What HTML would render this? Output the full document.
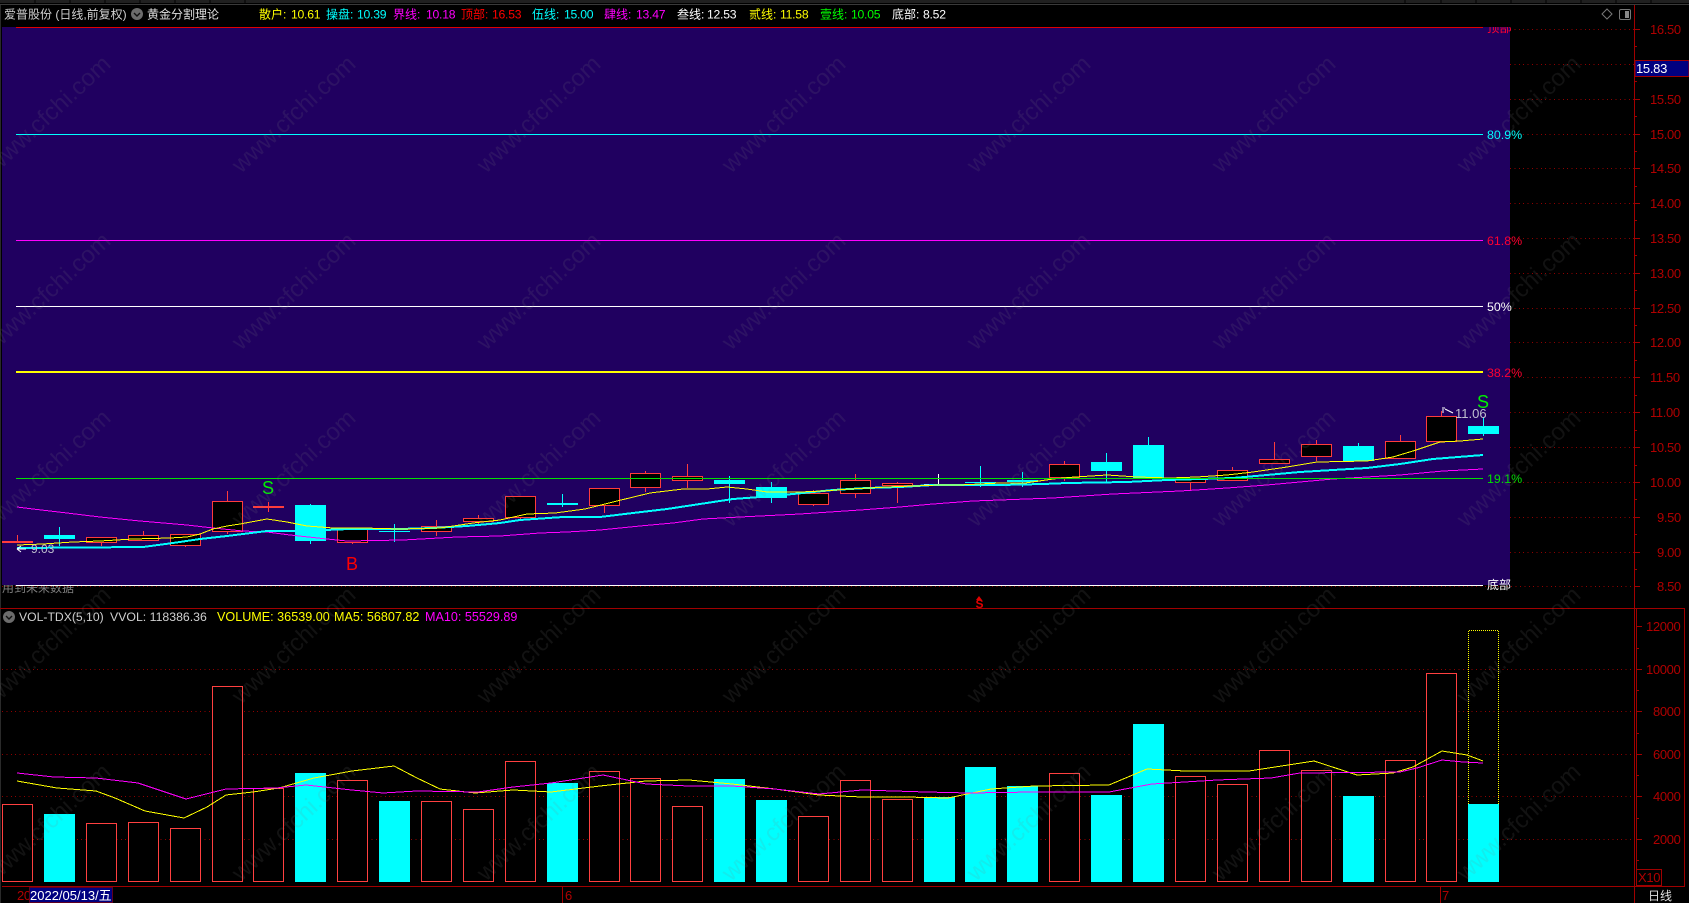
<!DOCTYPE html>
<html><head><meta charset="utf-8"><style>
html,body{margin:0;padding:0;background:#000;width:1689px;height:903px;overflow:hidden}
svg{display:block}
text{font-family:"Liberation Sans","Noto Sans CJK SC",sans-serif;font-size:12px;white-space:pre}
.hd text{font-size:12px}
.hd tspan{font-size:12.2px;letter-spacing:-.25px}
.ax text{fill:#b00000;font-size:13px;letter-spacing:-.35px}
.fb text{font-size:12.4px}
.wm text{fill:rgba(128,128,128,.14);font-size:24px}
</style></head><body>
<svg width="1689" height="903" viewBox="0 0 1689 903" xmlns="http://www.w3.org/2000/svg">
<defs><clipPath id="tc"><rect x="1480" y="27" width="60" height="12"/></clipPath></defs>
<rect width="1689" height="903" fill="#000"/>
<!-- top strip -->
<rect x="0" y="0" width="1689" height="3" fill="#202020"/>
<path d="M35 0V3M70 0V3M105 0V3M140 0V3M175 0V3M210 0V3M245 0V3M1405 0V3M1441 0V3M1476 0V3M1511 0V3M1546 0V3M1581 0V3M1616 0V3M1651 0V3" stroke="#000" stroke-width="1"/>
<rect x="0" y="4" width="1689" height="1" fill="#3a3a3a"/>
<rect x="0" y="5" width="1" height="898" fill="#2a2a2a"/>
<!-- header -->
<g class="hd">
<text x="4" y="18.5" fill="#d0d0d0">爱普股份 (日线,前复权)</text>
<circle cx="137" cy="14" r="6" fill="#6c6c6c"/><path d="M134 13l3 3 3-3" stroke="#111" stroke-width="1.4" fill="none"/>
<text x="147" y="18.5" fill="#e0e0e0">黄金分割理论</text>
<text x="259" y="18.5" fill="#ffff00">散户: <tspan x="291">10.61</tspan></text>
<text x="326" y="18.5" fill="#00ffff">操盘: <tspan x="357">10.39</tspan></text>
<text x="393" y="18.5" fill="#ff00ff">界线: <tspan x="426">10.18</tspan></text>
<text x="461" y="18.5" fill="#ff0000">顶部: <tspan x="492">16.53</tspan></text>
<text x="532" y="18.5" fill="#00ffff">伍线: <tspan x="564">15.00</tspan></text>
<text x="604" y="18.5" fill="#ff00ff">肆线: <tspan x="636">13.47</tspan></text>
<text x="677" y="18.5" fill="#ffffff">叁线: <tspan x="707">12.53</tspan></text>
<text x="749" y="18.5" fill="#ffff00">贰线: <tspan x="780">11.58</tspan></text>
<text x="820" y="18.5" fill="#00ff00">壹线: <tspan x="851">10.05</tspan></text>
<text x="892" y="18.5" fill="#ffffff">底部: <tspan x="923">8.52</tspan></text>
</g>
<!-- top right icons -->
<path d="M1607 9l5 5-5 5-5-5z" fill="none" stroke="#777" stroke-width="1"/>
<rect x="1619.5" y="9.5" width="11" height="10" rx="1.5" fill="none" stroke="#777"/><rect x="1625" y="11" width="4" height="7" fill="#888"/>
<!-- clipped note -->
<text x="2" y="592" fill="#808080" font-size="12">用到未来数据</text>
<!-- purple -->
<rect x="2" y="27" width="1508" height="558" fill="#200060"/>
<g shape-rendering="crispEdges">
<path d="M1510 29.5H1634M1510 64.5H1634M1510 99.5H1634M1510 134.5H1634M1510 168.5H1634M1510 203.5H1634M1510 238.5H1634M1510 273.5H1634M1510 308.5H1634M1510 342.5H1634M1510 377.5H1634M1510 412.5H1634M1510 447.5H1634M1510 482.5H1634M1510 517.5H1634M1510 552.5H1634M2 586.5H1634" stroke="#900000" stroke-dasharray="1 3.4" fill="none"/>
<path d="M2 669.5H1634M2 711.5H1634M2 754.5H1634M2 796.5H1634M2 839.5H1634" stroke="#900000" stroke-dasharray="1 3.4" fill="none"/>
<!-- fib lines -->
<path d="M16 27.5H1483" stroke="#e00000"/>
<path d="M16 134.5H1483" stroke="#00ffff"/>
<path d="M16 240.5H1483" stroke="#ff00ff"/>
<path d="M16 306.5H1483" stroke="#ffffff"/>
<path d="M16 372H1483" stroke="#ffff00" stroke-width="2"/>
<path d="M16 585.5H1483" stroke="#ffffff"/>
<!-- wicks -->
<path d="M17.5 535V543M101.5 542V546M143.5 531V536M185.5 546V547M227.5 491V534M268.5 502V512M352.5 542V544M436.5 520V536M478.5 515V524M520.5 518V520M604.5 506V513M645.5 471V492M687.5 464V488M813.5 490V506M855.5 474V498M897.5 482V503M1064.5 461V481M1190.5 482V490M1232.5 467V480M1274.5 442V459M1316.5 440V461M1400.5 435V442M1441.5 411V416" stroke="#ff3c3c" fill="none"/>
<path d="M59.5 527V546M310.5 504V544M394.5 524V542M562.5 494V507M729.5 476V503M771.5 482V503M980.5 466V487M1022.5 472V487M1106.5 453V482M1148.5 437V445M1358.5 443V446M1483.5 417V436" stroke="#00ffff" fill="none"/>
<path d="M938.5 474V485" stroke="#fff" fill="none"/>
<!-- candle bodies red -->
<g fill="#000" stroke="#ff3c3c">
<rect x="86.5" y="537.5" width="30" height="5"/>
<rect x="128.5" y="535.5" width="30" height="5"/>
<rect x="170.5" y="534.5" width="30" height="11"/>
<rect x="212.5" y="501.5" width="30" height="30"/>
<rect x="337.5" y="528.5" width="30" height="14"/>
<rect x="421.5" y="526.5" width="30" height="5"/>
<rect x="463.5" y="518.5" width="30" height="3"/>
<rect x="505.5" y="496.5" width="30" height="21"/>
<rect x="589.5" y="488.5" width="30" height="17"/>
<rect x="630.5" y="473.5" width="30" height="14"/>
<rect x="672.5" y="476.5" width="30" height="4"/>
<rect x="798.5" y="493.5" width="30" height="11"/>
<rect x="840.5" y="480.5" width="30" height="13"/>
<rect x="882.5" y="483.5" width="30" height="2"/>
<rect x="1049.5" y="464.5" width="30" height="13"/>
<rect x="1175.5" y="479.5" width="30" height="3"/>
<rect x="1217.5" y="470.5" width="30" height="10"/>
<rect x="1259.5" y="459.5" width="30" height="4"/>
<rect x="1301.5" y="444.5" width="30" height="12"/>
<rect x="1385.5" y="441.5" width="30" height="17"/>
<rect x="1426.5" y="416.5" width="30" height="25"/>
</g>
<g fill="#ff3c3c">
<rect x="2" y="541" width="31" height="2"/>
<rect x="253" y="506" width="31" height="2"/>
</g>
<g fill="#00ffff">
<rect x="44" y="535" width="31" height="4"/>
<rect x="295" y="505" width="31" height="36"/>
<rect x="379" y="531" width="31" height="1"/>
<rect x="547" y="503" width="31" height="2"/>
<rect x="714" y="480" width="31" height="4"/>
<rect x="756" y="487" width="31" height="11"/>
<rect x="965" y="482" width="31" height="1"/>
<rect x="1007" y="480" width="31" height="2"/>
<rect x="1091" y="462" width="31" height="9"/>
<rect x="1133" y="445" width="31" height="33"/>
<rect x="1343" y="446" width="31" height="15"/>
<rect x="1468" y="426" width="31" height="8"/>
</g>
<rect x="924" y="484" width="31" height="1" fill="#fff"/>
</g>
<!-- MAs price -->
<g fill="none" shape-rendering="crispEdges">
<polyline stroke="#ff00ff" points="17,507 33,509 67,513 100,517 140,521 187,525 213,528 243,531 267,532 290,535 327,539 347,541 403,540 457,537 500,536 540,533 567,532 600,530 640,526 673,523 703,519 740,517 800,514 860,510 900,507 933,504 973,501 1000,500 1053,498 1113,494 1180,491 1227,488 1267,485 1333,479 1400,475 1443,471 1483,469"/>
<polyline stroke="#00ffff" stroke-width="2" points="17,548 143,547 173,543 200,539 227,536 267,531 300,531 350,529 400,529 433,528 467,526 500,523 520,520 563,517 600,517 633,513 667,509 700,504 733,499 760,497 793,494 833,490 867,488 900,487 933,485 1000,485 1043,484 1067,483 1127,482 1167,480 1233,478 1267,475 1300,472 1333,470 1367,468 1400,464 1433,459 1483,455"/>
<polyline stroke="#ffff00" points="17,545 43,544 73,542 100,541 133,539 170,538 187,537 200,534 213,529 227,526 240,524 267,519 287,522 307,526 333,528 363,528 400,529 440,528 473,523 500,520 527,514 555,513 585,509 617,501 650,493 683,489 707,489 727,487 747,489 767,492 800,492 823,491 850,489 887,487 940,485 959,485 1000,483 1025,483 1053,479 1075,477 1107,475 1137,477 1170,478 1197,477 1227,475 1253,472 1287,467 1317,462 1367,461 1393,457 1413,451 1440,442 1460,441 1483,439"/>
<path d="M16 478.5H1483" stroke="#00e000"/>
</g>
<!-- fib labels -->
<g class="fb">
<g clip-path="url(#tc)"><text x="1487" y="32" fill="#ff0030">顶部</text></g>
<text x="1487" y="139" fill="#00ffff">80.9%</text>
<text x="1487" y="245" fill="#ff0030">61.8%</text>
<text x="1487" y="311" fill="#ffffff">50%</text>
<text x="1487" y="377" fill="#ff0030">38.2%</text>
<text x="1487" y="483" fill="#00e000">19.1%</text>
<text x="1487" y="589" fill="#ffffff" style="font-size:12px">底部</text>
</g>
<!-- signals -->
<text x="262" y="494" fill="#00f000" style="font-size:18px">S</text>
<text x="346" y="570" fill="#ff0000" style="font-size:18px">B</text>
<text x="1477" y="408" fill="#00f000" style="font-size:18px">S</text>
<text x="1455" y="418" fill="#c0c0d0" style="font-size:13px">11.06</text>
<path d="M1442 408h3M1442 410h2M1442 412h2M1445 409l8 4" stroke="#fff" fill="none"/>
<text x="31" y="553" fill="#c0c0d0" style="font-size:12px">9.03</text>
<path d="M17 549h9M17 549l4-3M17 549l4 3" stroke="#fff" fill="none"/>
<path d="M979 596l3 4h-6z" fill="#e00000"/>
<text x="975.5" y="608" fill="#e00000" style="font-size:12px;font-weight:bold">S</text>
<!-- volume header -->
<circle cx="9" cy="617" r="6" fill="#6c6c6c"/><path d="M6 616l3 3 3-3" stroke="#111" stroke-width="1.4" fill="none"/>
<text x="19" y="621" fill="#d0d0d0" style="font-size:12.2px">VOL-TDX(5,10)</text>
<text x="110" y="621" fill="#d0d0d0" style="font-size:12.3px">VVOL: 118386.36</text>
<text x="217" y="621" fill="#ffff00" style="font-size:12.6px">VOLUME: 36539.00</text>
<text x="334" y="621" fill="#ffff00" style="font-size:12.6px">MA5: 56807.82</text>
<text x="425" y="621" fill="#ff00ff" style="font-size:12.6px">MA10: 55529.89</text>
<!-- volume bars -->
<g shape-rendering="crispEdges">
<g fill="#000" stroke="#ff4040">
<rect x="2.5" y="804.5" width="30" height="77"/>
<rect x="86.5" y="823.5" width="30" height="58"/>
<rect x="128.5" y="822.5" width="30" height="59"/>
<rect x="170.5" y="828.5" width="30" height="53"/>
<rect x="212.5" y="686.5" width="30" height="195"/>
<rect x="253.5" y="788.5" width="30" height="93"/>
<rect x="337.5" y="780.5" width="30" height="101"/>
<rect x="421.5" y="801.5" width="30" height="80"/>
<rect x="463.5" y="809.5" width="30" height="72"/>
<rect x="505.5" y="761.5" width="30" height="120"/>
<rect x="589.5" y="771.5" width="30" height="110"/>
<rect x="630.5" y="778.5" width="30" height="103"/>
<rect x="672.5" y="806.5" width="30" height="75"/>
<rect x="798.5" y="816.5" width="30" height="65"/>
<rect x="840.5" y="780.5" width="30" height="101"/>
<rect x="882.5" y="799.5" width="30" height="82"/>
<rect x="1049.5" y="773.5" width="30" height="108"/>
<rect x="1175.5" y="776.5" width="30" height="105"/>
<rect x="1217.5" y="784.5" width="30" height="97"/>
<rect x="1259.5" y="750.5" width="30" height="131"/>
<rect x="1301.5" y="770.5" width="30" height="111"/>
<rect x="1385.5" y="760.5" width="30" height="121"/>
<rect x="1426.5" y="673.5" width="30" height="208"/>
</g>
<g fill="#00ffff">
<rect x="44" y="814" width="31" height="68"/>
<rect x="295" y="773" width="31" height="109"/>
<rect x="379" y="801" width="31" height="81"/>
<rect x="547" y="783" width="31" height="99"/>
<rect x="714" y="779" width="31" height="103"/>
<rect x="756" y="800" width="31" height="82"/>
<rect x="924" y="797" width="31" height="85"/>
<rect x="965" y="767" width="31" height="115"/>
<rect x="1007" y="786" width="31" height="96"/>
<rect x="1091" y="795" width="31" height="87"/>
<rect x="1133" y="724" width="31" height="158"/>
<rect x="1343" y="796" width="31" height="86"/>
<rect x="1468" y="804" width="31" height="78"/>
</g>
<path d="M1468.5 804V630.5H1498.5V804" fill="none" stroke="#ffff00" stroke-dasharray="1 1"/>
</g>
<!-- volume MAs -->
<g fill="none" shape-rendering="crispEdges">
<polyline stroke="#ffff00" points="17,781 57,788 96,791 115,798 145,811 184,818 207,807 226,795 253,792 279,788 314,778 352,771 394,766 417,778 440,789 475,793 513,790 551,792 600,786 646,781 689,780 732,784 775,789 819,795 862,797 905,797 948,798 991,789 1034,786 1109,785 1147,769 1185,771 1249,771 1314,761 1357,775 1393,773 1413,767 1442,751 1467,755 1483,761"/>
<polyline stroke="#ff00ff" points="17,773 54,777 96,778 138,783 186,799 226,789 276,788 306,785 352,790 383,793 417,791 478,792 513,787 551,783 603,775 646,784 689,786 732,786 775,789 819,794 862,790 926,792 969,793 1034,792 1109,792 1152,784 1217,780 1271,778 1300,773 1400,772 1417,768 1442,760 1463,762 1483,763"/>
</g>
<!-- axes -->
<g shape-rendering="crispEdges" fill="none" stroke="#a00000">
<path d="M1634.5 5V903"/>
<path d="M0 608.5H1684.5V886.5H2"/>
<path d="M1636.5 608V886"/>
<path d="M1634 29.5h6M1634 99.5h6M1634 134.5h6M1634 168.5h6M1634 203.5h6M1634 238.5h6M1634 273.5h6M1634 308.5h6M1634 342.5h6M1634 377.5h6M1634 412.5h6M1634 447.5h6M1634 482.5h6M1634 517.5h6M1634 552.5h6M1634 586.5h6"/>
<path d="M1634 46.5h3M1634 81.5h3M1634 116.5h3M1634 151.5h3M1634 186.5h3M1634 220.5h3M1634 255.5h3M1634 290.5h3M1634 325.5h3M1634 360.5h3M1634 395.5h3M1634 430.5h3M1634 465.5h3M1634 499.5h3M1634 534.5h3M1634 569.5h3"/>
<path d="M1636 626.5h6M1636 669.5h6M1636 711.5h6M1636 754.5h6M1636 796.5h6M1636 839.5h6"/>
<path d="M1636 648.5h3M1636 690.5h3M1636 733.5h3M1636 775.5h3M1636 818.5h3M1636 860.5h3"/>
<rect x="1636.5" y="869.5" width="25" height="16"/>
<path d="M562.5 887V903M1440.5 887V903"/>
</g>
<g class="ax">
<text x="1650" y="34">16.50</text>
<text x="1650" y="104">15.50</text>
<text x="1650" y="139">15.00</text>
<text x="1650" y="173">14.50</text>
<text x="1650" y="208">14.00</text>
<text x="1650" y="243">13.50</text>
<text x="1650" y="278">13.00</text>
<text x="1650" y="313">12.50</text>
<text x="1650" y="347">12.00</text>
<text x="1650" y="382">11.50</text>
<text x="1650" y="417">11.00</text>
<text x="1650" y="452">10.50</text>
<text x="1650" y="487">10.00</text>
<text x="1657" y="522">9.50</text>
<text x="1657" y="557">9.00</text>
<text x="1657" y="591">8.50</text>
<text x="1646" y="631">12000</text>
<text x="1646" y="674">10000</text>
<text x="1653" y="716">8000</text>
<text x="1653" y="759">6000</text>
<text x="1653" y="801">4000</text>
<text x="1653" y="844">2000</text>
<text x="1638" y="882">X10</text>
<text x="17" y="900">20</text>
<text x="565" y="900">6</text>
<text x="1442" y="900">7</text>
</g>
<text x="1648" y="900" fill="#e0e0e0">日线</text>
<rect x="1635" y="60.5" width="54" height="16" fill="#000080" stroke="#a00000"/>
<text x="1636" y="73" fill="#ffffff" style="font-size:13px;letter-spacing:-.3px">15.83</text>
<rect x="29.5" y="887.5" width="83" height="15" fill="#000080" stroke="#600020"/>
<text x="30" y="900" fill="#ffffff" style="font-size:13px">2022/05/13/五</text>
<!-- watermark -->
<g class="wm">
<text transform="translate(-4 174) rotate(-43)">www.cfchi.com</text>
<text transform="translate(241 174) rotate(-43)">www.cfchi.com</text>
<text transform="translate(486 174) rotate(-43)">www.cfchi.com</text>
<text transform="translate(731 174) rotate(-43)">www.cfchi.com</text>
<text transform="translate(976 174) rotate(-43)">www.cfchi.com</text>
<text transform="translate(1221 174) rotate(-43)">www.cfchi.com</text>
<text transform="translate(1466 174) rotate(-43)">www.cfchi.com</text>
<text transform="translate(-4 351) rotate(-43)">www.cfchi.com</text>
<text transform="translate(241 351) rotate(-43)">www.cfchi.com</text>
<text transform="translate(486 351) rotate(-43)">www.cfchi.com</text>
<text transform="translate(731 351) rotate(-43)">www.cfchi.com</text>
<text transform="translate(976 351) rotate(-43)">www.cfchi.com</text>
<text transform="translate(1221 351) rotate(-43)">www.cfchi.com</text>
<text transform="translate(1466 351) rotate(-43)">www.cfchi.com</text>
<text transform="translate(-4 528) rotate(-43)">www.cfchi.com</text>
<text transform="translate(241 528) rotate(-43)">www.cfchi.com</text>
<text transform="translate(486 528) rotate(-43)">www.cfchi.com</text>
<text transform="translate(731 528) rotate(-43)">www.cfchi.com</text>
<text transform="translate(976 528) rotate(-43)">www.cfchi.com</text>
<text transform="translate(1221 528) rotate(-43)">www.cfchi.com</text>
<text transform="translate(1466 528) rotate(-43)">www.cfchi.com</text>
<text transform="translate(-4 705) rotate(-43)">www.cfchi.com</text>
<text transform="translate(241 705) rotate(-43)">www.cfchi.com</text>
<text transform="translate(486 705) rotate(-43)">www.cfchi.com</text>
<text transform="translate(731 705) rotate(-43)">www.cfchi.com</text>
<text transform="translate(976 705) rotate(-43)">www.cfchi.com</text>
<text transform="translate(1221 705) rotate(-43)">www.cfchi.com</text>
<text transform="translate(1466 705) rotate(-43)">www.cfchi.com</text>
<text transform="translate(-4 882) rotate(-43)">www.cfchi.com</text>
<text transform="translate(241 882) rotate(-43)">www.cfchi.com</text>
<text transform="translate(486 882) rotate(-43)">www.cfchi.com</text>
<text transform="translate(731 882) rotate(-43)">www.cfchi.com</text>
<text transform="translate(976 882) rotate(-43)">www.cfchi.com</text>
<text transform="translate(1221 882) rotate(-43)">www.cfchi.com</text>
<text transform="translate(1466 882) rotate(-43)">www.cfchi.com</text>
</g>
</svg>
</body></html>
